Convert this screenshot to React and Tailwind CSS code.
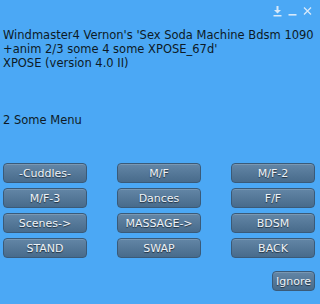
import { useState } from 'react'

const buttons = [
  '-Cuddles-', 'M/F', 'M/F-2',
  'M/F-3', 'Dances', 'F/F',
  'Scenes->', 'MASSAGE->', 'BDSM',
  'STAND', 'SWAP', 'BACK',
]

function DialogButton({ label, className = '' }) {
  return (
    <button
      className={`h-[20px] rounded-[4px] border border-[#3a5a78] bg-gradient-to-b from-[#6386a6] to-[#486b8b] text-[11px] leading-none text-[#eef3f8] shadow-[inset_0_1px_0_rgba(255,255,255,0.15)] [text-shadow:0_1px_1px_rgba(0,0,0,0.6)] ${className}`}
    >
      {label}
    </button>
  )
}

export default function App() {
  const [closed] = useState(false)
  if (closed) return null

  return (
    <div className="relative flex h-[304px] w-[320px] flex-col bg-[#4ba8f5] font-['DejaVu_Sans',sans-serif] text-[#0d1a26]">
      <div className="flex h-[17px] items-end justify-end gap-[6px] pr-[8px] text-[#d7e9fa]">
        <svg width="9" height="11" viewBox="0 0 9 11" fill="currentColor">
          <rect x="3.5" y="0" width="2" height="4" />
          <path d="M1 4h7L4.5 7.5z" />
          <rect x="0.5" y="9" width="8" height="1.5" />
        </svg>
        <svg width="9" height="11" viewBox="0 0 9 11" fill="currentColor">
          <rect x="0.5" y="8" width="8" height="1.6" />
        </svg>
        <svg width="9" height="11" viewBox="0 0 9 11" stroke="currentColor" strokeWidth="1.3">
          <path d="M1 1.5l7 7M8 1.5l-7 7" />
        </svg>
      </div>

      <div className="mt-[11px] whitespace-nowrap pl-[3px] text-[11.5px] leading-[14px]">
        <p>Windmaster4 Vernon's 'Sex Soda Machine Bdsm 1090</p>
        <p>+anim 2/3 some 4 some XPOSE_67d'</p>
        <p>XPOSE (version 4.0 II)</p>
      </div>

      <p className="mt-[43px] pl-[3px] text-[11.5px] leading-[14px]">2 Some Menu</p>

      <div className="mt-[36px] grid grid-cols-[84px_84px_84px] gap-x-[30px] gap-y-[5px] pl-[3px]">
        {buttons.map((b) => (
          <DialogButton key={b} label={b} />
        ))}
      </div>

      <div className="mt-[13px] flex justify-end pr-[5px]">
        <DialogButton label="Ignore" className="w-[43px]" />
      </div>
    </div>
  )
}
